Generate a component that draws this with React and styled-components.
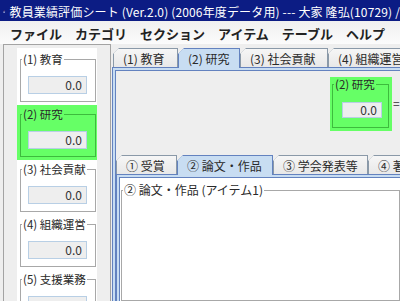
import React from 'react';
import styled, { createGlobalStyle } from 'styled-components';

const GlobalStyle = createGlobalStyle`
  html, body {
    margin: 0;
    padding: 0;
    background: #eeeeee;
  }
  body {
    font-family: "Noto Sans CJK JP", "Noto Sans", sans-serif;
  }
`;

const categories = [
  { label: '(1) 教育', value: '0.0' },
  { label: '(2) 研究', value: '0.0', active: true },
  { label: '(3) 社会貢献', value: '0.0' },
  { label: '(4) 組織運営', value: '0.0' },
  { label: '(5) 支援業務', value: '0.0' },
];

const topTabs = [
  { label: '(1) 教育', width: 65 },
  { label: '(2) 研究', width: 62, selected: true },
  { label: '(3) 社会貢献', width: 88 },
  { label: '(4) 組織運営', width: 90 },
];

const sectionTabs = [
  { label: '① 受賞', width: 61 },
  { label: '② 論文・作品', width: 96, selected: true },
  { label: '③ 学会発表等', width: 95 },
  { label: '④ 著書', width: 90 },
];

const menus = ['ファイル', 'カテゴリ', 'セクション', 'アイテム', 'テーブル', 'ヘルプ'];

function JavaIcon() {
  return (
    <svg width="16" height="17" viewBox="0 0 16 17">
      <path d="M7.2 0.8 C4.8 3, 9.6 4.2, 7.2 6.4 C5.8 7.8, 8.8 8.4, 7.4 9.6" fill="none" stroke="#e8361a" strokeWidth="1.6" />
      <path d="M9.8 2.2 C8.6 3.8, 11 5, 9.6 6.8" fill="none" stroke="#ff9a2a" strokeWidth="1.2" />
      <path d="M2.2 9.6 h9.8 v1.6 a3.4 3.4 0 0 1 -3.4 3.4 h-3 a3.4 3.4 0 0 1 -3.4 -3.4 z" fill="#f4f7ff" stroke="#8fb0ff" strokeWidth="1" />
      <path d="M4 11 h6" stroke="#c23a20" strokeWidth="1" />
      <circle cx="13" cy="11.4" r="1.5" fill="none" stroke="#8fb0ff" strokeWidth="1" />
      <ellipse cx="7.4" cy="15.8" rx="6.8" ry="1" fill="#b9ccff" />
    </svg>
  );
}

function Category({ label, value, active }) {
  return (
    <Slot active={active}>
      <Group active={active}>
        <GroupTitle>{label}</GroupTitle>
        <Field width={59} height={18} indent={7}>{value}</Field>
      </Group>
    </Slot>
  );
}

function TabStrip({ tabs, inset }) {
  return (
    <Strip inset={inset}>
      {tabs.map((t) => (
        <Tab key={t.label} width={t.width} selected={t.selected}>
          <TabFace selected={t.selected}>{t.label}</TabFace>
        </Tab>
      ))}
    </Strip>
  );
}

export default function App() {
  return (
    <>
      <GlobalStyle />
      <Window>
        <TitleBar>
          <JavaIcon />
          <TitleText>教員業績評価シート (Ver.2.0) (2006年度データ用) --- 大家 隆弘(10729) /</TitleText>
        </TitleBar>

        <MenuBar>
          {menus.map((m) => (
            <MenuItem key={m}>{m}</MenuItem>
          ))}
        </MenuBar>

        <Body>
          <SidePane>
            <SideColumn>
              {categories.map((c) => (
                <Category key={c.label} {...c} />
              ))}
            </SideColumn>
          </SidePane>

          <MainPane>
            <TabStrip tabs={topTabs} inset={1} />
            <TabContent>
              <TabInner>
                <ScoreRow>
                  <ScoreBox>
                    <Group active>
                      <GroupTitle>(2) 研究</GroupTitle>
                      <Field width={40} height={16} indent={9} compact>0.0</Field>
                    </Group>
                  </ScoreBox>
                  <Equals>=</Equals>
                  <BlankBox />
                </ScoreRow>

                <SectionPane>
                  <TabStrip tabs={sectionTabs} inset={0} />
                  <TabContent>
                    <TabInner white>
                      <ItemGroup>
                        <ItemTitle>② 論文・作品 (アイテム1)</ItemTitle>
                      </ItemGroup>
                    </TabInner>
                  </TabContent>
                </SectionPane>
              </TabInner>
            </TabContent>
          </MainPane>
        </Body>
      </Window>
    </>
  );
}

const Window = styled.div`
  width: 400px;
  height: 301px;
  overflow: hidden;
  display: flex;
  flex-direction: column;
  background: #eeeeee;
`;

const TitleBar = styled.div`
  height: 21px;
  flex: none;
  display: flex;
  align-items: center;
  gap: 4px;
  padding: 1px 0 0 3px;
  box-sizing: border-box;
  background: #0c1c84;
  color: #ffffff;
  white-space: nowrap;
`;

const TitleText = styled.span`
  font-size: 12px;
  letter-spacing: 0.15px;
`;

const MenuBar = styled.div`
  height: 23px;
  flex: none;
  display: flex;
  align-items: center;
  padding: 2px 0 0 3.5px;
  box-sizing: border-box;
  background: linear-gradient(#f0f0f0, #fbfbfb);
`;

const MenuItem = styled.div`
  padding: 0 6.5px;
  font-size: 13px;
  font-weight: bold;
  color: #222222;
  white-space: nowrap;
`;

const Body = styled.div`
  flex: 1;
  min-height: 0;
  display: flex;
`;

const SidePane = styled.div`
  flex: none;
  width: 108px;
  margin-left: 3px;
  padding: 3px 13px 0 13px;
  box-sizing: border-box;
  border: 1px solid #a3a3a3;
  border-bottom: none;
  overflow: hidden;
`;

const SideColumn = styled.div`
  width: 80px;
  height: 100%;
  padding-top: 2px;
  box-sizing: border-box;
  background: #ffffff;
  display: flex;
  flex-direction: column;
`;

const Slot = styled.div`
  flex: none;
  padding: 3px 1px 3px 3px;
  background: ${(p) => (p.active ? '#66ff66' : 'transparent')};
`;

const Group = styled.fieldset`
  margin: 0;
  padding: 11px 0 7px 0;
  min-width: 0;
  border: 1px solid ${(p) => (p.active ? '#3dbb3d' : '#a8a8a8')};
`;

const GroupTitle = styled.legend`
  margin-left: 1px;
  padding: 0 1px;
  font-size: 11.5px;
  line-height: 12px;
  color: #2a2a2a;
  white-space: nowrap;
`;

const Field = styled.div`
  width: ${(p) => p.width}px;
  height: ${(p) => p.height}px;
  margin-left: ${(p) => p.indent}px;
  margin-top: ${(p) => (p.compact ? 1 : 0)}px;
  margin-bottom: ${(p) => (p.compact ? 2 : 0)}px;
  padding-right: 4px;
  box-sizing: border-box;
  border: 1px solid #b8cfe5;
  background: #eeeeee;
  font-size: 12px;
  line-height: ${(p) => p.height - 2}px;
  text-align: right;
  color: #333333;
`;

const MainPane = styled.div`
  flex: 1;
  min-width: 0;
  padding: 4px 0 0 1px;
  display: flex;
  flex-direction: column;
`;

const Strip = styled.div`
  flex: none;
  height: 20px;
  display: flex;
  align-items: flex-start;
  padding-left: ${(p) => p.inset}px;
  position: relative;
  z-index: 1;
`;

const Tab = styled.div`
  flex: none;
  width: ${(p) => p.width}px;
  height: ${(p) => (p.selected ? 20 : 19)}px;
  padding: 1px 1px 0 1px;
  box-sizing: border-box;
  background: ${(p) => (p.selected ? '#6382bf' : '#8a99a8')};
  clip-path: polygon(6px 0, 100% 0, 100% 100%, 0 100%, 0 6px);
`;

const TabFace = styled.div`
  height: 100%;
  display: flex;
  align-items: center;
  padding-left: 9px;
  background: ${(p) => (p.selected ? '#c8ddf2' : 'linear-gradient(#f6f6f6, #e8e8e8)')};
  clip-path: polygon(2.6px 0, 100% 0, 100% 100%, 0 100%, 0 2.6px);
  font-size: 12px;
  color: #2a2a2a;
  white-space: nowrap;
`;

const TabContent = styled.div`
  flex: 1;
  min-height: 0;
  margin-top: -1px;
  padding: 2px 0 0 2px;
  border-top: 1px solid #6382bf;
  border-left: 1px solid #6382bf;
  background: #c8ddf2;
  display: flex;
  flex-direction: column;
`;

const TabInner = styled.div`
  flex: 1;
  min-height: 0;
  border-top: 1px solid #6382bf;
  border-left: 1px solid #6382bf;
  background: ${(p) => (p.white ? '#ffffff' : '#eeeeee')};
  display: flex;
  flex-direction: column;
`;

const ScoreRow = styled.div`
  flex: none;
  display: flex;
  align-items: flex-start;
  padding: 6px 0 0 214px;
`;

const ScoreBox = styled.div`
  flex: none;
  width: 62px;
  height: 54px;
  padding: 1px 3px 3px 2px;
  box-sizing: border-box;
  background: #66ff66;
`;

const Equals = styled.div`
  flex: none;
  margin: 20px 0 0 1px;
  font-size: 12px;
  line-height: 12px;
  color: #333333;
`;

const BlankBox = styled.div`
  flex: none;
  width: 60px;
  height: 54px;
  background: #ffffff;
`;

const SectionPane = styled.div`
  flex: 1;
  min-height: 0;
  margin-top: 24px;
  display: flex;
  flex-direction: column;
`;

const ItemGroup = styled.fieldset`
  margin: 6px 0 0 1px;
  padding: 0;
  height: 200px;
  min-width: 0;
  border: 1px solid #a8a8a8;
`;

const ItemTitle = styled.legend`
  margin-left: 1px;
  padding: 0 1px;
  font-size: 12px;
  line-height: 12px;
  color: #2a2a2a;
  white-space: nowrap;
`;
